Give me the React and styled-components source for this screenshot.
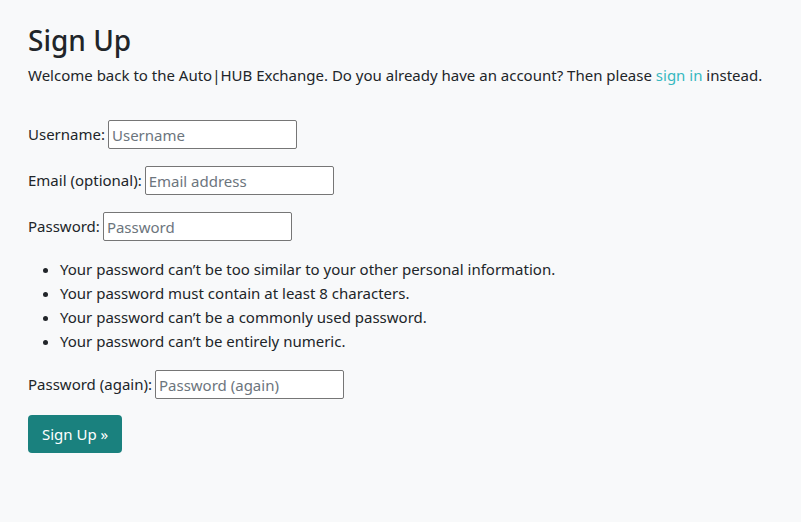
import React from "react";
import styled, { createGlobalStyle } from "styled-components";

const Global = createGlobalStyle`
  html, body { margin: 0; padding: 0; background: #f8f9fa; }
  body {
    font-family: "Noto Sans", "Open Sans", sans-serif;
    font-size: 15px;
    line-height: 1.5;
    color: #212529;
  }
  * { box-sizing: border-box; }
`;

const Page = styled.main`
  padding: 24px 28px 40px;
  min-height: 522px;
`;

const Title = styled.h1`
  margin: 0 0 6px;
  font-size: 28px;
  font-weight: 500;
  line-height: 1.2;
`;

const Lead = styled.p`
  margin: 0 0 34px;
`;

const Link = styled.a`
  color: #36b8c0;
  text-decoration: none;
`;

const Form = styled.form`
  display: flex;
  flex-direction: column;
`;

const Row = styled.p`
  margin: 0 0 ${(p) => (p.$last ? 16 : 17)}px;
  display: flex;
  align-items: center;
  gap: 3px;
  height: 29px;
`;

const Label = styled.label``;

const Input = styled.input`
  width: 189px;
  height: 29px;
  border: 1px solid #767676;
  border-radius: 2px;
  padding: 1px 3px;
  font: inherit;
  color: #212529;
  background: #fff;
  &::placeholder { color: #6c757d; opacity: 1; }
`;

const Help = styled.ul`
  margin: -1px 0 17px;
  padding-left: 32px;
  line-height: 24px;
`;

const Button = styled.button`
  align-self: flex-start;
  background: #1a817e;
  color: #fff;
  border: none;
  border-radius: 4px;
  font: inherit;
  font-size: 15px;
  padding: 6px 14px;
  height: 38px;
  cursor: pointer;
`;

export default function App() {
  return (
    <Page>
      <Global />
      <Title>Sign Up</Title>
      <Lead>
        Welcome back to the Auto|HUB Exchange. Do you already have an account? Then please{" "}
        <Link href="#">sign in</Link> instead.
      </Lead>
      <Form onSubmit={(e) => e.preventDefault()}>
        <Row>
          <Label htmlFor="u">Username:</Label>
          <Input id="u" placeholder="Username" />
        </Row>
        <Row>
          <Label htmlFor="e">Email (optional):</Label>
          <Input id="e" placeholder="Email address" />
        </Row>
        <Row>
          <Label htmlFor="p1">Password:</Label>
          <Input id="p1" type="password" placeholder="Password" />
        </Row>
        <Help>
          <li>Your password can’t be too similar to your other personal information.</li>
          <li>Your password must contain at least 8 characters.</li>
          <li>Your password can’t be a commonly used password.</li>
          <li>Your password can’t be entirely numeric.</li>
        </Help>
        <Row $last>
          <Label htmlFor="p2">Password (again):</Label>
          <Input id="p2" type="password" placeholder="Password (again)" />
        </Row>
        <Button type="submit">Sign Up »</Button>
      </Form>
    </Page>
  );
}
